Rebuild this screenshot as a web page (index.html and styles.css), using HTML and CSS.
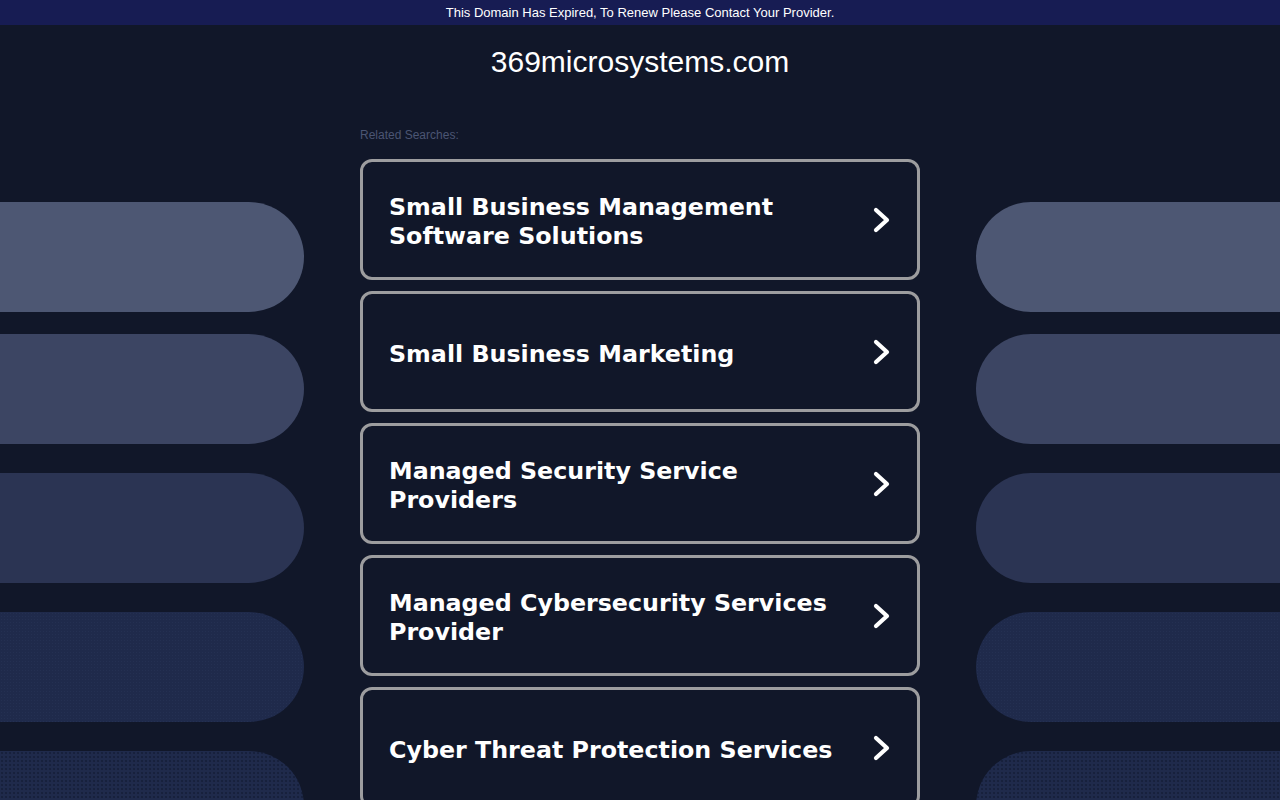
FILE: index.html
```html
<!DOCTYPE html>
<html lang="en">
<head>
<meta charset="utf-8">
<title>369microsystems.com</title>
<link rel="stylesheet" href="styles.css">
</head>
<body>
<div class="banner">This Domain Has Expired, To Renew Please Contact Your Provider.</div>
<div class="layout">
  <div class="side side-left">
    <div class="pill p1"></div>
    <div class="pill p2"></div>
    <div class="pill p3"></div>
    <div class="pill p4"></div>
    <div class="pill p5"></div>
  </div>
  <main class="center">
    <h1 class="domain">369microsystems.com</h1>
    <div class="label">Related Searches:</div>
    <div class="cards">
      <a class="card" href="#"><span class="card-text">Small Business Management Software Solutions</span><svg class="chev" viewBox="0 0 20 30" width="20" height="30"><polyline points="4,5 15,15 4,25"/></svg></a>
      <a class="card" href="#"><span class="card-text">Small Business Marketing</span><svg class="chev" viewBox="0 0 20 30" width="20" height="30"><polyline points="4,5 15,15 4,25"/></svg></a>
      <a class="card" href="#"><span class="card-text">Managed Security Service Providers</span><svg class="chev" viewBox="0 0 20 30" width="20" height="30"><polyline points="4,5 15,15 4,25"/></svg></a>
      <a class="card" href="#"><span class="card-text">Managed Cybersecurity Services Provider</span><svg class="chev" viewBox="0 0 20 30" width="20" height="30"><polyline points="4,5 15,15 4,25"/></svg></a>
      <a class="card" href="#"><span class="card-text">Cyber Threat Protection Services</span><svg class="chev" viewBox="0 0 20 30" width="20" height="30"><polyline points="4,5 15,15 4,25"/></svg></a>
    </div>
  </main>
  <div class="side side-right">
    <div class="pill p1"></div>
    <div class="pill p2"></div>
    <div class="pill p3"></div>
    <div class="pill p4"></div>
    <div class="pill p5"></div>
  </div>
</div>
</body>
</html>
```
FILE: styles.css
```css
html, body {
  margin: 0;
  padding: 0;
  background: #111729;
  height: 800px;
  overflow: hidden;
}
body {
  font-family: "Liberation Sans", Arial, sans-serif;
  color: #ffffff;
}
.banner {
  height: 25px;
  line-height: 25px;
  background: #171c53;
  color: #ffffff;
  text-align: center;
  font-size: 13px;
  font-family: "Liberation Sans", Arial, sans-serif;
}
.layout {
  display: grid;
  grid-template-columns: 304px 560px 304px;
  justify-content: space-between;
}
.side {
  display: flex;
  flex-direction: column;
  gap: 29px;
  padding-top: 177px;
}
.pill {
  height: 110px;
  flex: none;
}
.side-left .pill { border-radius: 0 55px 55px 0; }
.side-right .pill { border-radius: 55px 0 0 55px; }
.pill.p2 { margin-top: -7px; }
.p1 { background: #4d5773; }
.p2 { background: #3c4563; }
.p3 { background: #2b3453; }
.p4 {
  background-color: #1f2a4b;
  background-image: radial-gradient(circle, rgba(42,56,92,0.45) 0.6px, transparent 1px);
  background-size: 3px 3px;
}
.p5 {
  background-color: #1f2a4b;
  background-image: radial-gradient(circle, rgba(14,22,42,0.45) 0.7px, transparent 1.1px);
  background-size: 4px 4px;
}
.center {
  display: flex;
  flex-direction: column;
}
.domain {
  margin: 0;
  padding-top: 19px;
  height: 55px;
  font-family: "Liberation Sans", Arial, sans-serif;
  font-weight: normal;
  font-size: 30px;
  line-height: 36px;
  text-align: center;
  color: #ffffff;
}
.label {
  margin-top: 29px;
  height: 20px;
  font-size: 12px;
  line-height: 14px;
  color: #4b5573;
}
.cards {
  display: flex;
  flex-direction: column;
  gap: 11px;
  margin-top: 11px;
}
.card {
  box-sizing: border-box;
  height: 121px;
  border: 3px solid #9d9d9f;
  border-radius: 12px;
  display: flex;
  align-items: center;
  justify-content: space-between;
  padding: 5px 25px 0 26px;
  text-decoration: none;
  color: #ffffff;
}
.card-text {
  font-family: "DejaVu Sans", Verdana, sans-serif;
  font-weight: bold;
  font-size: 23.75px;
  line-height: 29px;
  max-width: 462px;
}
.chev {
  flex: none;
  fill: none;
  stroke: #ffffff;
  stroke-width: 4.2;
  stroke-linecap: round;
  stroke-linejoin: round;
  margin-top: -5px;
}
```
